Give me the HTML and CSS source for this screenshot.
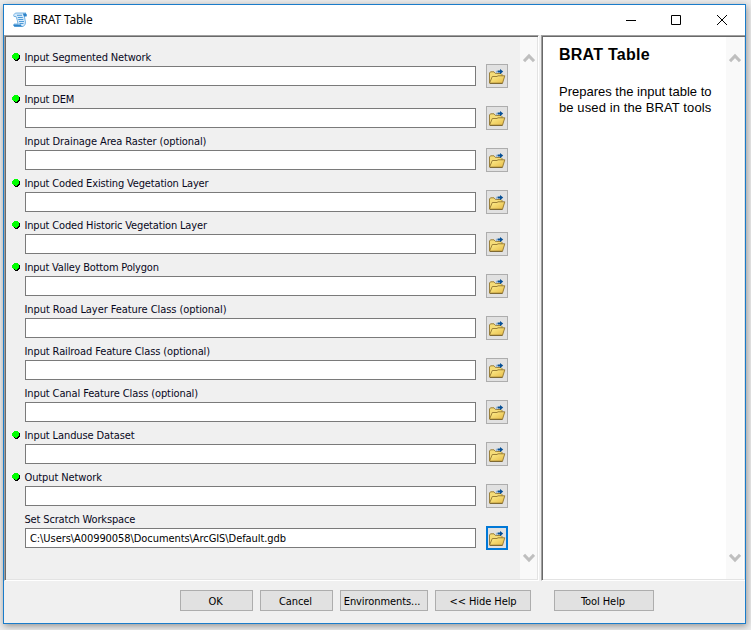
FILE: index.html
```html
<!DOCTYPE html>
<html lang="en">
<head>
<meta charset="utf-8">
<title>BRAT Table</title>
<link rel="stylesheet" href="styles.css">
</head>
<body>
<svg class="defs" aria-hidden="true">
  <defs>
    <linearGradient id="gold" x1="0" y1="0" x2="1" y2="1"><stop offset="0" stop-color="#fff08f"/><stop offset="1" stop-color="#e6bb48"/></linearGradient>
    <symbol id="folder" viewBox="0 0 18 18">
      <path d="M1.500 16V6L2.500 4.800h3.500L7.500 6.500h5.500l1 1V10" fill="#f5dc78" stroke="#92752f" stroke-width=".9"/>
      <path d="M1.500 16.200L4.300 9.500H9L10 8.800H16.800L14.500 16.200Z" fill="url(#gold)" stroke="#92752f" stroke-width=".9" stroke-linejoin="round"/>
      <path d="M2 16.500h12.500" stroke="#6a541e" stroke-width=".7"/>
      <path d="M8.500 6.300V4.300H10" fill="none" stroke="#9bb9d4" stroke-width="1.200"/>
      <path d="M9.700 3.600h2.300V2L15.200 4.500 12 7.300V5.500H9.700Z" fill="#064f96"/>
    </symbol>
    <symbol id="up" viewBox="0 0 12 10"><path d="M1 8.200L6 3l5 5.200" fill="none" stroke="#bfbfbf" stroke-width="3"/></symbol>
    <symbol id="dot" viewBox="0 0 9 9"><path d="M6 1h1v1h1v4H7v1H6v1H3V7H2V6h4z" fill="#000"/><path d="M2 0h4v1h1v4H6v1H5v1H3V6H1V5H0V2h1V1h1z" fill="#0f0"/></symbol>
  </defs>
</svg>
<div class="window">
  <header class="titlebar">
    <svg class="logo" viewBox="0 0 16 16">
      <path d="M2 2.500Q3 .5 5 1H14Q11.500 2 12.500 5L13.500 10Q14 13 11 14.500H2.500Q1 13.500 2 12H6Q5.500 8 4 4.500H2Q1.300 3.500 2 2.500Z" fill="#d5eafb" stroke="#5ba3dc" stroke-width=".8"/>
      <path d="M11 1.500h3q1.500 1 .6 3h-2.500Q11 3 11 1.500ZM2 12.500h7q0 2 2 2H2.500Q1 14 2 12.500Z" fill="#2d83c9"/>
      <path d="M5 3.300h5M5.800 5.500h5M6.300 7.500h5M7 9.500h5M7.500 11.500h4" stroke="#4192d2" stroke-width=".9"/>
    </svg>
    <h1>BRAT Table</h1>
    <svg class="controls" viewBox="0 0 102 10"><path d="M0 5.500h10M45.500.5h9v9h-9zM91 0l10 10M101 0L91 10" fill="none" stroke="#000"/></svg>
  </header>
  <main>
    <section class="panel params">
      <div class="form">
        <div class="row req"><svg class="dot"><use href="#dot"/></svg><label class="l1">Input Segmented Network</label><input type="text"><button><svg><use href="#folder"/></svg></button></div>
        <div class="row req"><svg class="dot"><use href="#dot"/></svg><label class="l2">Input DEM</label><input type="text"><button><svg><use href="#folder"/></svg></button></div>
        <div class="row"><label class="l3">Input Drainage Area Raster (optional)</label><input type="text"><button><svg><use href="#folder"/></svg></button></div>
        <div class="row req"><svg class="dot"><use href="#dot"/></svg><label class="l4">Input Coded Existing Vegetation Layer</label><input type="text"><button><svg><use href="#folder"/></svg></button></div>
        <div class="row req"><svg class="dot"><use href="#dot"/></svg><label class="l5">Input Coded Historic Vegetation Layer</label><input type="text"><button><svg><use href="#folder"/></svg></button></div>
        <div class="row req"><svg class="dot"><use href="#dot"/></svg><label class="l6">Input Valley Bottom Polygon</label><input type="text"><button><svg><use href="#folder"/></svg></button></div>
        <div class="row"><label class="l7">Input Road Layer Feature Class (optional)</label><input type="text"><button><svg><use href="#folder"/></svg></button></div>
        <div class="row"><label class="l8">Input Railroad Feature Class (optional)</label><input type="text"><button><svg><use href="#folder"/></svg></button></div>
        <div class="row"><label class="l9">Input Canal Feature Class (optional)</label><input type="text"><button><svg><use href="#folder"/></svg></button></div>
        <div class="row req"><svg class="dot"><use href="#dot"/></svg><label class="l10">Input Landuse Dataset</label><input type="text"><button><svg><use href="#folder"/></svg></button></div>
        <div class="row req"><svg class="dot"><use href="#dot"/></svg><label class="l11">Output Network</label><input type="text"><button><svg><use href="#folder"/></svg></button></div>
        <div class="row"><label class="l12">Set Scratch Workspace</label><input type="text" value="C:\Users\A00990058\Documents\ArcGIS\Default.gdb"><button class="focus"><svg><use href="#folder"/></svg></button></div>
      </div>
      <div class="scroll"><svg><use href="#up"/></svg><svg class="down"><use href="#up"/></svg></div>
    </section>
    <section class="panel help">
      <article><h2>BRAT Table</h2><p>Prepares the input table to</p><p class="wide">be used in the BRAT tools</p></article>
      <div class="scroll"><svg><use href="#up"/></svg><svg class="down"><use href="#up"/></svg></div>
    </section>
  </main>
  <footer>
    <button class="ok">OK</button><button class="cancel">Cancel</button><button class="env">Environments...</button><button class="hide">&lt;&lt; Hide Help</button><button class="tool">Tool Help</button>
  </footer>
</div>
</body>
</html>
```
FILE: styles.css
```css
* { box-sizing: border-box; }
body { margin: 0; height: 630px; overflow: hidden; padding: 4px 0 0 3px; background: #ececec; font: 11px/14px "DejaVu Sans Condensed", "DejaVu Sans", sans-serif; color: #000; }
.defs { position: absolute; width: 0; height: 0; }
.window { width: 743px; height: 620px; border: 1px solid #1a7cca; background: #f0f0f0; box-shadow: 1px 2px 7px rgba(0,0,0,.38); }
.titlebar { height: 30px; background: #fff; display: flex; align-items: center; padding: 0 17px 0 8px; }
.logo { width: 16px; height: 16px; }
h1 { flex: 1; margin: 0 0 0 5px; font: 12px/16px "Noto Sans", sans-serif; letter-spacing: -.2px; }
.controls { width: 102px; height: 10px; margin-top: -1px; }
main { display: flex; gap: 2px; height: 546px; }
.panel { display: flex; border: 1px solid; border-color: #a0a0a0 #fff #fff #a0a0a0; box-shadow: inset 1px 1px #696969, inset -1px -1px #e3e3e3; padding: 1px; }
.params { width: 535px; }
.help { width: 204px; background: #fff; border-right: 0; padding-right: 2px; }
.form { flex: 1; padding: 12px 0 0 5px; }
.row { display: grid; grid-template-columns: 14px 451px 10px 22px; grid-template-rows: 15px 2px 20px 5px; height: 42px; align-items: center; }
.row .dot { grid-area: 1 / 1; width: 9px; height: 9px; margin: 4px 0 0 1px; align-self: start; }
.row label { grid-area: 1 / 2; white-space: nowrap; color: #08081c; align-self: start; margin-top: 2px; margin-left: -.5px; }
.l1, .l2, .l4, .l5, .l12 { letter-spacing: -.16px; }
.l3, .l8, .l9, .l10, .l11 { letter-spacing: -.11px; }
.l6 { letter-spacing: -.2px; }
.l7 { letter-spacing: -.07px; }
.row input { grid-area: 3 / 2; height: 20px; width: 451px; border: 1px solid #7a7a7a; border-radius: 0; padding: 0 4px; background: #fff; font: inherit; letter-spacing: -.07px; color: #000; outline: 0; }
.row button { grid-area: 3 / 4; width: 22px; height: 24px; padding: 0; border: 1px solid #adadad; border-radius: 0; background: #e1e1e1; display: flex; align-items: center; justify-content: center; }
.row button.focus { border: 2px solid #0078d7; }
.row button svg { width: 18px; height: 18px; flex: none; }
.scroll { width: 17px; background: #f9f9f9; display: flex; flex-direction: column; justify-content: space-between; align-items: center; padding: 16px 0; }
.scroll svg { width: 12px; height: 10px; }
.scroll .down { transform: rotate(180deg); }
.help article { flex: 1; padding: 8px 0 0 16px; font: 13px/16px "Liberation Sans", sans-serif; }
h2 { font: bold 16px/20px "Liberation Sans", sans-serif; margin: 0 0 19px; letter-spacing: .25px; }
.help p { margin: 0; white-space: nowrap; }
.help .wide { letter-spacing: .1px; }
footer { display: flex; height: 42px; padding: 9px 0 0 176px; }
footer button { height: 21px; padding: 2px 2px 0 0; border: 1px solid #adadad; border-radius: 0; background: #e1e1e1; font: inherit; letter-spacing: -.08px; color: #000; margin-right: 7px; width: 73px; white-space: nowrap; }
footer .env { width: 88px; padding-right: 4px; }
footer .hide { width: 96px; margin-right: 23px; padding-right: 0; }
footer .tool { width: 100px; }
```
